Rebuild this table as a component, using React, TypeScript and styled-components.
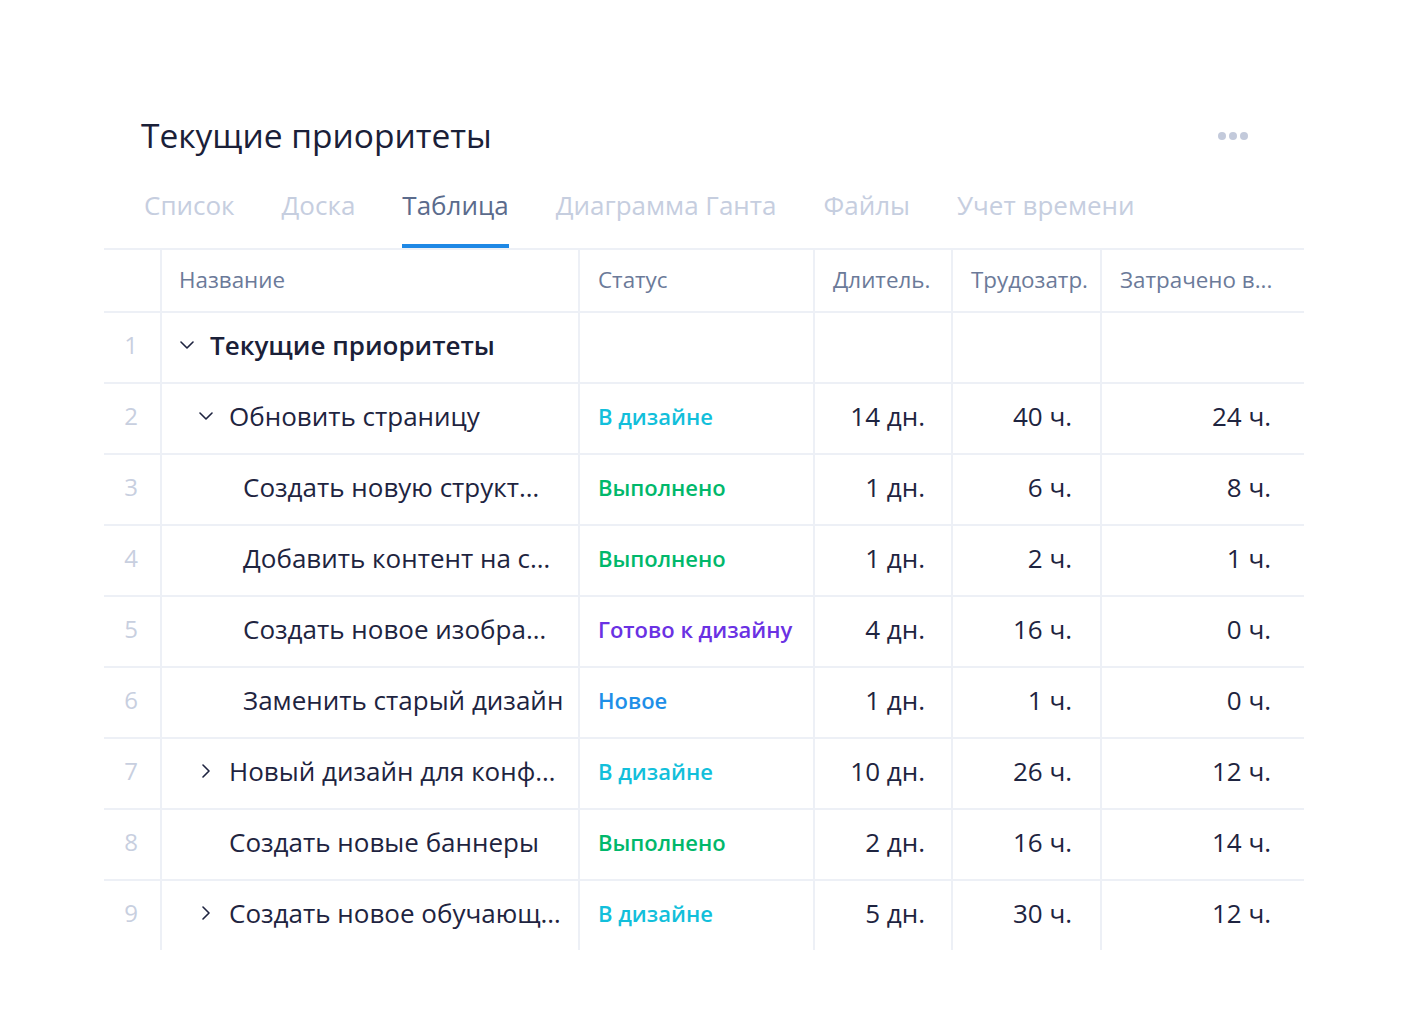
import React from "react";
import styled, { createGlobalStyle } from "styled-components";

const Global = createGlobalStyle`
  html, body { margin: 0; padding: 0; background: #ffffff; }
  body { font-family: "Open Sans", "Noto Sans", sans-serif; color: #1e2440; }
  * { box-sizing: border-box; }
`;

const Page = styled.div`
  width: 1408px;
  min-height: 1024px;
  padding: 114px 104px 0 104px;
`;

const Header = styled.div`
  display: flex;
  align-items: center;
  justify-content: space-between;
  padding: 0 56px 0 37px;
  height: 42px;
`;

const Title = styled.h1`
  margin: 0;
  font-size: 33.5px;
  line-height: 42px;
  font-weight: 400;
  color: #1a2038;
`;

const Dots = styled.div`
  display: flex;
  gap: 3px;
  margin-top: 2px;
`;

const Dot = styled.span`
  width: 8px;
  height: 8px;
  border-radius: 50%;
  background: #c3cadb;
`;

const Tabs = styled.nav`
  display: flex;
  gap: 47px;
  padding-left: 40px;
  margin-top: 32px;
`;

const Tab = styled.div<{ $active?: boolean }>`
  font-size: 26px;
  line-height: 34px;
  padding-bottom: 22px;
  border-bottom: 4px solid ${(p) => (p.$active ? "#1e88e5" : "transparent")};
  color: ${(p) => (p.$active ? "#5b6b8c" : "#c6cedf")};
  white-space: nowrap;
`;

const Table = styled.div`
  width: 1200px;
`;

const Row = styled.div<{ $header?: boolean }>`
  display: grid;
  grid-template-columns: 56px 418px 235px 138px 149px 204px;
  border-top: 2px solid #edf0f6;
  height: ${(p) => (p.$header ? "63px" : "71px")};
`;

const Cell = styled.div<{ $align?: "left" | "right" | "center"; $pl?: number; $pr?: number }>`
  display: flex;
  align-items: center;
  justify-content: ${(p) =>
    p.$align === "right" ? "flex-end" : p.$align === "center" ? "center" : "flex-start"};
  padding-left: ${(p) => p.$pl ?? 0}px;
  padding-right: ${(p) => p.$pr ?? 0}px;
  padding-bottom: 6px;
  white-space: nowrap;
  overflow: hidden;
  & + & {
    border-left: 2px solid #edf0f6;
  }
`;

const HeadCell = styled(Cell)`
  padding-bottom: 2px;
  font-size: 22.4px;
  color: #6b7a99;
`;

const RowNum = styled.span`
  font-size: 24px;
  color: #c8cfdf;
  padding-right: 2px;
`;

const Toggle = styled.span`
  width: 14px;
  height: 14px;
  display: flex;
  align-items: center;
  justify-content: center;
  margin-right: 16px;
  flex: none;
`;

const Name = styled.span<{ $bold?: boolean }>`
  font-size: 26px;
  font-weight: ${(p) => (p.$bold ? 600 : 400)};
  color: ${(p) => (p.$bold ? "#1a2038" : "#1e2440")};
`;

const Status = styled.span<{ $color: string }>`
  font-size: 22px;
  font-weight: 600;
  color: ${(p) => p.$color};
`;

const Num = styled.span`
  font-size: 26px;
  color: #1e2440;
`;

const ChevronDown = () => (
  <svg width="14" height="8" viewBox="0 0 14 8" fill="none">
    <path d="M1 1 L7 7 L13 1" stroke="#1e2440" strokeWidth="1.6" strokeLinecap="round" strokeLinejoin="round" />
  </svg>
);

const ChevronRight = () => (
  <svg width="8" height="14" viewBox="0 0 8 14" fill="none">
    <path d="M1 1 L7 7 L1 13" stroke="#1e2440" strokeWidth="1.6" strokeLinecap="round" strokeLinejoin="round" />
  </svg>
);

const STATUS: Record<string, string> = {
  design: "#12bfdb",
  done: "#00b86b",
  ready: "#6a31e3",
  new: "#1e8fe8",
};

const STATUS_TEXT: Record<string, string> = {
  design: "В дизайне",
  done: "Выполнено",
  ready: "Готово к дизайну",
  new: "Новое",
};

type RowData = {
  name: string;
  indent: number;
  toggle?: "down" | "right" | "none";
  bold?: boolean;
  status?: string;
  dur?: string;
  labor?: string;
  spent?: string;
};

const rows: RowData[] = [
  { name: "Текущие приоритеты", indent: 18, toggle: "down", bold: true },
  { name: "Обновить страницу", indent: 37, toggle: "down", status: "design", dur: "14 дн.", labor: "40 ч.", spent: "24 ч." },
  { name: "Создать новую структ…", indent: 81, status: "done", dur: "1 дн.", labor: "6 ч.", spent: "8 ч." },
  { name: "Добавить контент на с…", indent: 81, status: "done", dur: "1 дн.", labor: "2 ч.", spent: "1 ч." },
  { name: "Создать новое изобра…", indent: 81, status: "ready", dur: "4 дн.", labor: "16 ч.", spent: "0 ч." },
  { name: "Заменить старый дизайн", indent: 81, status: "new", dur: "1 дн.", labor: "1 ч.", spent: "0 ч." },
  { name: "Новый дизайн для конф…", indent: 37, toggle: "right", status: "design", dur: "10 дн.", labor: "26 ч.", spent: "12 ч." },
  { name: "Создать новые баннеры", indent: 37, toggle: "none", status: "done", dur: "2 дн.", labor: "16 ч.", spent: "14 ч." },
  { name: "Создать новое обучающ…", indent: 37, toggle: "right", status: "design", dur: "5 дн.", labor: "30 ч.", spent: "12 ч." },
];

const tabs = ["Список", "Доска", "Таблица", "Диаграмма Ганта", "Файлы", "Учет времени"];

export default function App() {
  return (
    <>
      <Global />
      <Page>
        <Header>
          <Title>Текущие приоритеты</Title>
          <Dots>
            <Dot />
            <Dot />
            <Dot />
          </Dots>
        </Header>
        <Tabs>
          {tabs.map((t) => (
            <Tab key={t} $active={t === "Таблица"}>
              {t}
            </Tab>
          ))}
        </Tabs>
        <Table>
          <Row $header>
            <HeadCell />
            <HeadCell $pl={17}>Название</HeadCell>
            <HeadCell $pl={18}>Статус</HeadCell>
            <HeadCell $pl={18}>Длитель.</HeadCell>
            <HeadCell $pl={18}>Трудозатр.</HeadCell>
            <HeadCell $pl={18}>Затрачено в...</HeadCell>
          </Row>
          {rows.map((r, i) => (
            <Row key={i}>
              <Cell $align="center">
                <RowNum>{i + 1}</RowNum>
              </Cell>
              <Cell $pl={r.indent}>
                {r.toggle && (
                  <Toggle>
                    {r.toggle === "down" && <ChevronDown />}
                    {r.toggle === "right" && <ChevronRight />}
                  </Toggle>
                )}
                <Name $bold={r.bold}>{r.name}</Name>
              </Cell>
              <Cell $pl={18}>
                {r.status && <Status $color={STATUS[r.status]}>{STATUS_TEXT[r.status]}</Status>}
              </Cell>
              <Cell $align="right" $pr={26}>
                <Num>{r.dur}</Num>
              </Cell>
              <Cell $align="right" $pr={28}>
                <Num>{r.labor}</Num>
              </Cell>
              <Cell $align="right" $pr={33}>
                <Num>{r.spent}</Num>
              </Cell>
            </Row>
          ))}
        </Table>
      </Page>
    </>
  );
}
